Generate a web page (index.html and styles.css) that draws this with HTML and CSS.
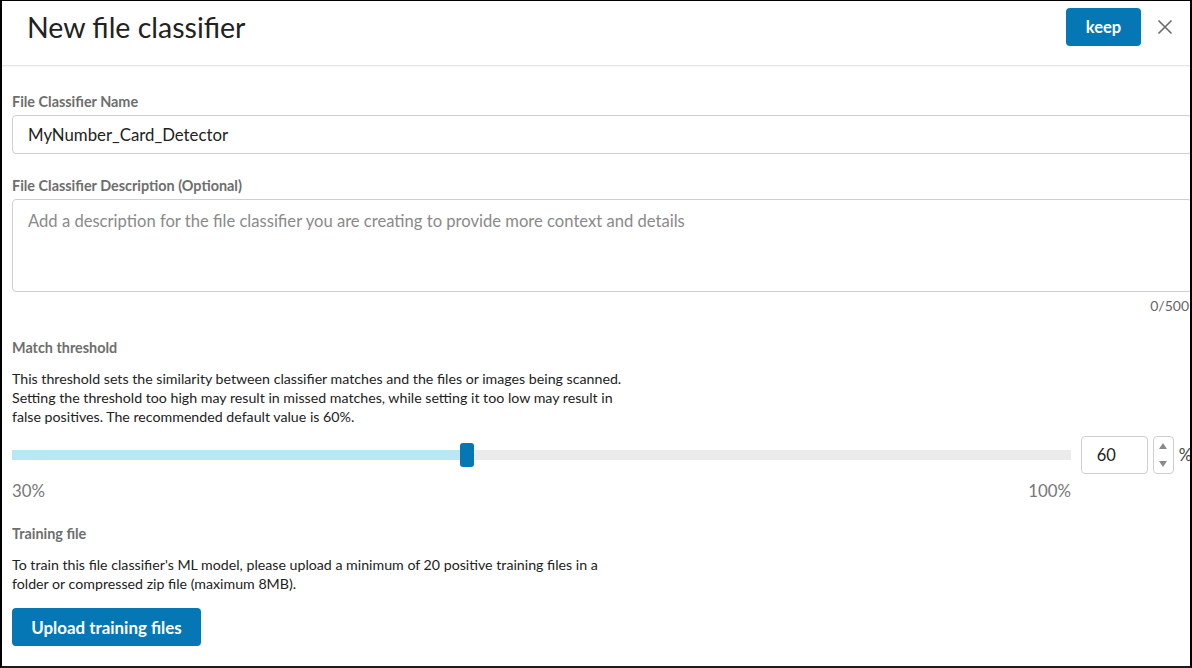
FILE: index.html
```html
<!DOCTYPE html>
<html lang="en">
<head>
    <meta charset="UTF-8">
    <meta name="viewport" content="width=device-width, initial-scale=1.0">
    <link rel="stylesheet" href="styles.css">
    <title>New file classifier</title>
</head>
<body>
    <div class="frame">
        <div class="header">
            <h1 class="title">New file classifier</h1>
            <button class="btn keep">keep</button>
            <span class="close" aria-label="Close">
                <svg width="16" height="16" viewBox="0 0 16 16">
                    <path d="M1.5 1.5 L14.5 14.5 M14.5 1.5 L1.5 14.5" stroke="#6a6a6a" stroke-width="1.6" fill="none"/>
                </svg>
            </span>
        </div>

        <div class="content">
            <div class="field-label label-first">File Classifier Name</div>
            <div class="text-input">MyNumber_Card_Detector</div>

            <div class="field-label label-gap">File Classifier Description (Optional)</div>
            <div class="text-area">Add a description for the file classifier you are creating to provide more context and details</div>
            <div class="counter">0/500</div>

            <!-- Match threshold -->
            <div class="field-label section-gap">Match threshold</div>
            <p class="help">This threshold sets the similarity between classifier matches and the files or images being scanned. Setting the threshold too high may result in missed matches, while setting it too low may result in false positives. The recommended default value is 60%.</p>

            <div class="slider-row">
                <div class="track">
                    <div class="track-fill" style="width: 42.86%"></div>
                    <div class="handle" style="left: 42.86%"></div>
                </div>
                <div class="number-input">60</div>
                <div class="spinner">
                    <span class="arrow-up"></span>
                    <span class="arrow-down"></span>
                </div>
                <span class="percent">%</span>
            </div>
            <div class="scale">
                <span>30%</span>
                <span>100%</span>
            </div>

            <!-- Training file -->
            <div class="field-label training-gap">Training file</div>
            <p class="help">To train this file classifier's ML model, please upload a minimum of 20 positive training files in a folder or compressed zip file (maximum 8MB).</p>

            <button class="btn upload">Upload training files</button>
        </div>
    </div>
</body>
</html>
```

FILE: styles.css
```css
body {
    margin: 0;
    font-family: Lato, "Open Sans", sans-serif;
    color: #222;
    background: #fff;
}

.frame {
    width: 1188px;
    height: 665px;
    border-left: 2px solid #000;
    border-right: 2px solid #000;
    border-top: 1px solid #000;
    border-bottom: 2px solid #1c1c1c;
    overflow: hidden;
    background: #fff;
}

.header {
    display: flex;
    align-items: center;
    height: 64px;
    padding: 0 17px 0 25px;
    border-bottom: 1px solid #e4e4e4;
    box-shadow: 0 1px 2px rgba(0, 0, 0, 0.04);
}

.title {
    margin: 0;
    font-size: 28.5px;
    font-weight: 400;
    color: #222;
    margin-top: -13px;
}

.btn {
    font-family: Lato, sans-serif;
    font-weight: 700;
    font-size: 16px;
    color: #fff;
    background-color: #0677b5;
    border: none;
    border-radius: 4px;
    cursor: pointer;
}

.keep {
    margin-left: auto;
    width: 75px;
    height: 38px;
    margin-top: -12px;
    font-size: 16.5px;
}

.close {
    display: flex;
    margin-left: 16px;
    margin-top: -12px;
}

.content {
    width: 1180px;
    padding-left: 10px;
}

.field-label {
    font-size: 14.4px;
    font-weight: 700;
    line-height: 16px;
    color: #6e6e6e;
    margin-bottom: 5px;
}

.label-first {
    margin-top: 28px;
}

.label-gap {
    margin-top: 24px;
}

.section-gap {
    margin-top: 26px;
}

.training-gap {
    margin-top: 25px;
}

.text-input {
    box-sizing: border-box;
    height: 39px;
    border: 1px solid #cfcfcf;
    border-radius: 4px;
    padding: 0 15px;
    font-size: 16.8px;
    line-height: 37px;
    color: #222;
}

.text-area {
    box-sizing: border-box;
    height: 93px;
    border: 1px solid #cfcfcf;
    border-radius: 4px;
    padding: 11px 15px;
    font-size: 16.6px;
    line-height: 20px;
    color: #8a8a8a;
}

.counter {
    text-align: right;
    font-size: 14px;
    line-height: 16px;
    color: #666;
    margin-top: 6px;
    margin-right: 3px;
}

.help {
    width: 616px;
    margin: 13px 0 0;
    font-size: 14.2px;
    line-height: 19px;
    color: #222;
}

.slider-row {
    display: flex;
    align-items: center;
    margin-top: 10px;
}

.track {
    position: relative;
    width: 1059px;
    height: 10px;
    background: #ebebeb;
}

.track-fill {
    height: 100%;
    background: #b8e8f4;
}

.handle {
    position: absolute;
    top: -7px;
    width: 14px;
    height: 24px;
    margin-left: -6px;
    background: #0677b5;
    border-radius: 3px;
}

.number-input {
    box-sizing: border-box;
    width: 67px;
    height: 38px;
    margin-left: 10px;
    border: 1px solid #cfcfcf;
    border-radius: 4px;
    padding-left: 15px;
    font-size: 16.5px;
    line-height: 36px;
    color: #222;
}

.spinner {
    box-sizing: border-box;
    display: flex;
    flex-direction: column;
    justify-content: space-between;
    align-items: center;
    width: 21px;
    height: 38px;
    margin-left: 5px;
    padding: 6px 0;
    border: 1px solid #cfcfcf;
    border-radius: 4px;
}

.arrow-up,
.arrow-down {
    width: 0;
    height: 0;
    border-left: 4px solid transparent;
    border-right: 4px solid transparent;
}

.arrow-up {
    border-bottom: 6px solid #8a8a8a;
}

.arrow-down {
    border-top: 6px solid #8a8a8a;
}

.percent {
    margin-left: 5px;
    font-size: 16.5px;
    color: #444;
}

.scale {
    display: flex;
    justify-content: space-between;
    width: 1059px;
    margin-top: 7px;
    font-size: 16.8px;
    line-height: 20px;
    color: #777;
}

.upload {
    display: block;
    width: 189px;
    height: 38px;
    margin-top: 15px;
    font-size: 16.9px;
}
```
